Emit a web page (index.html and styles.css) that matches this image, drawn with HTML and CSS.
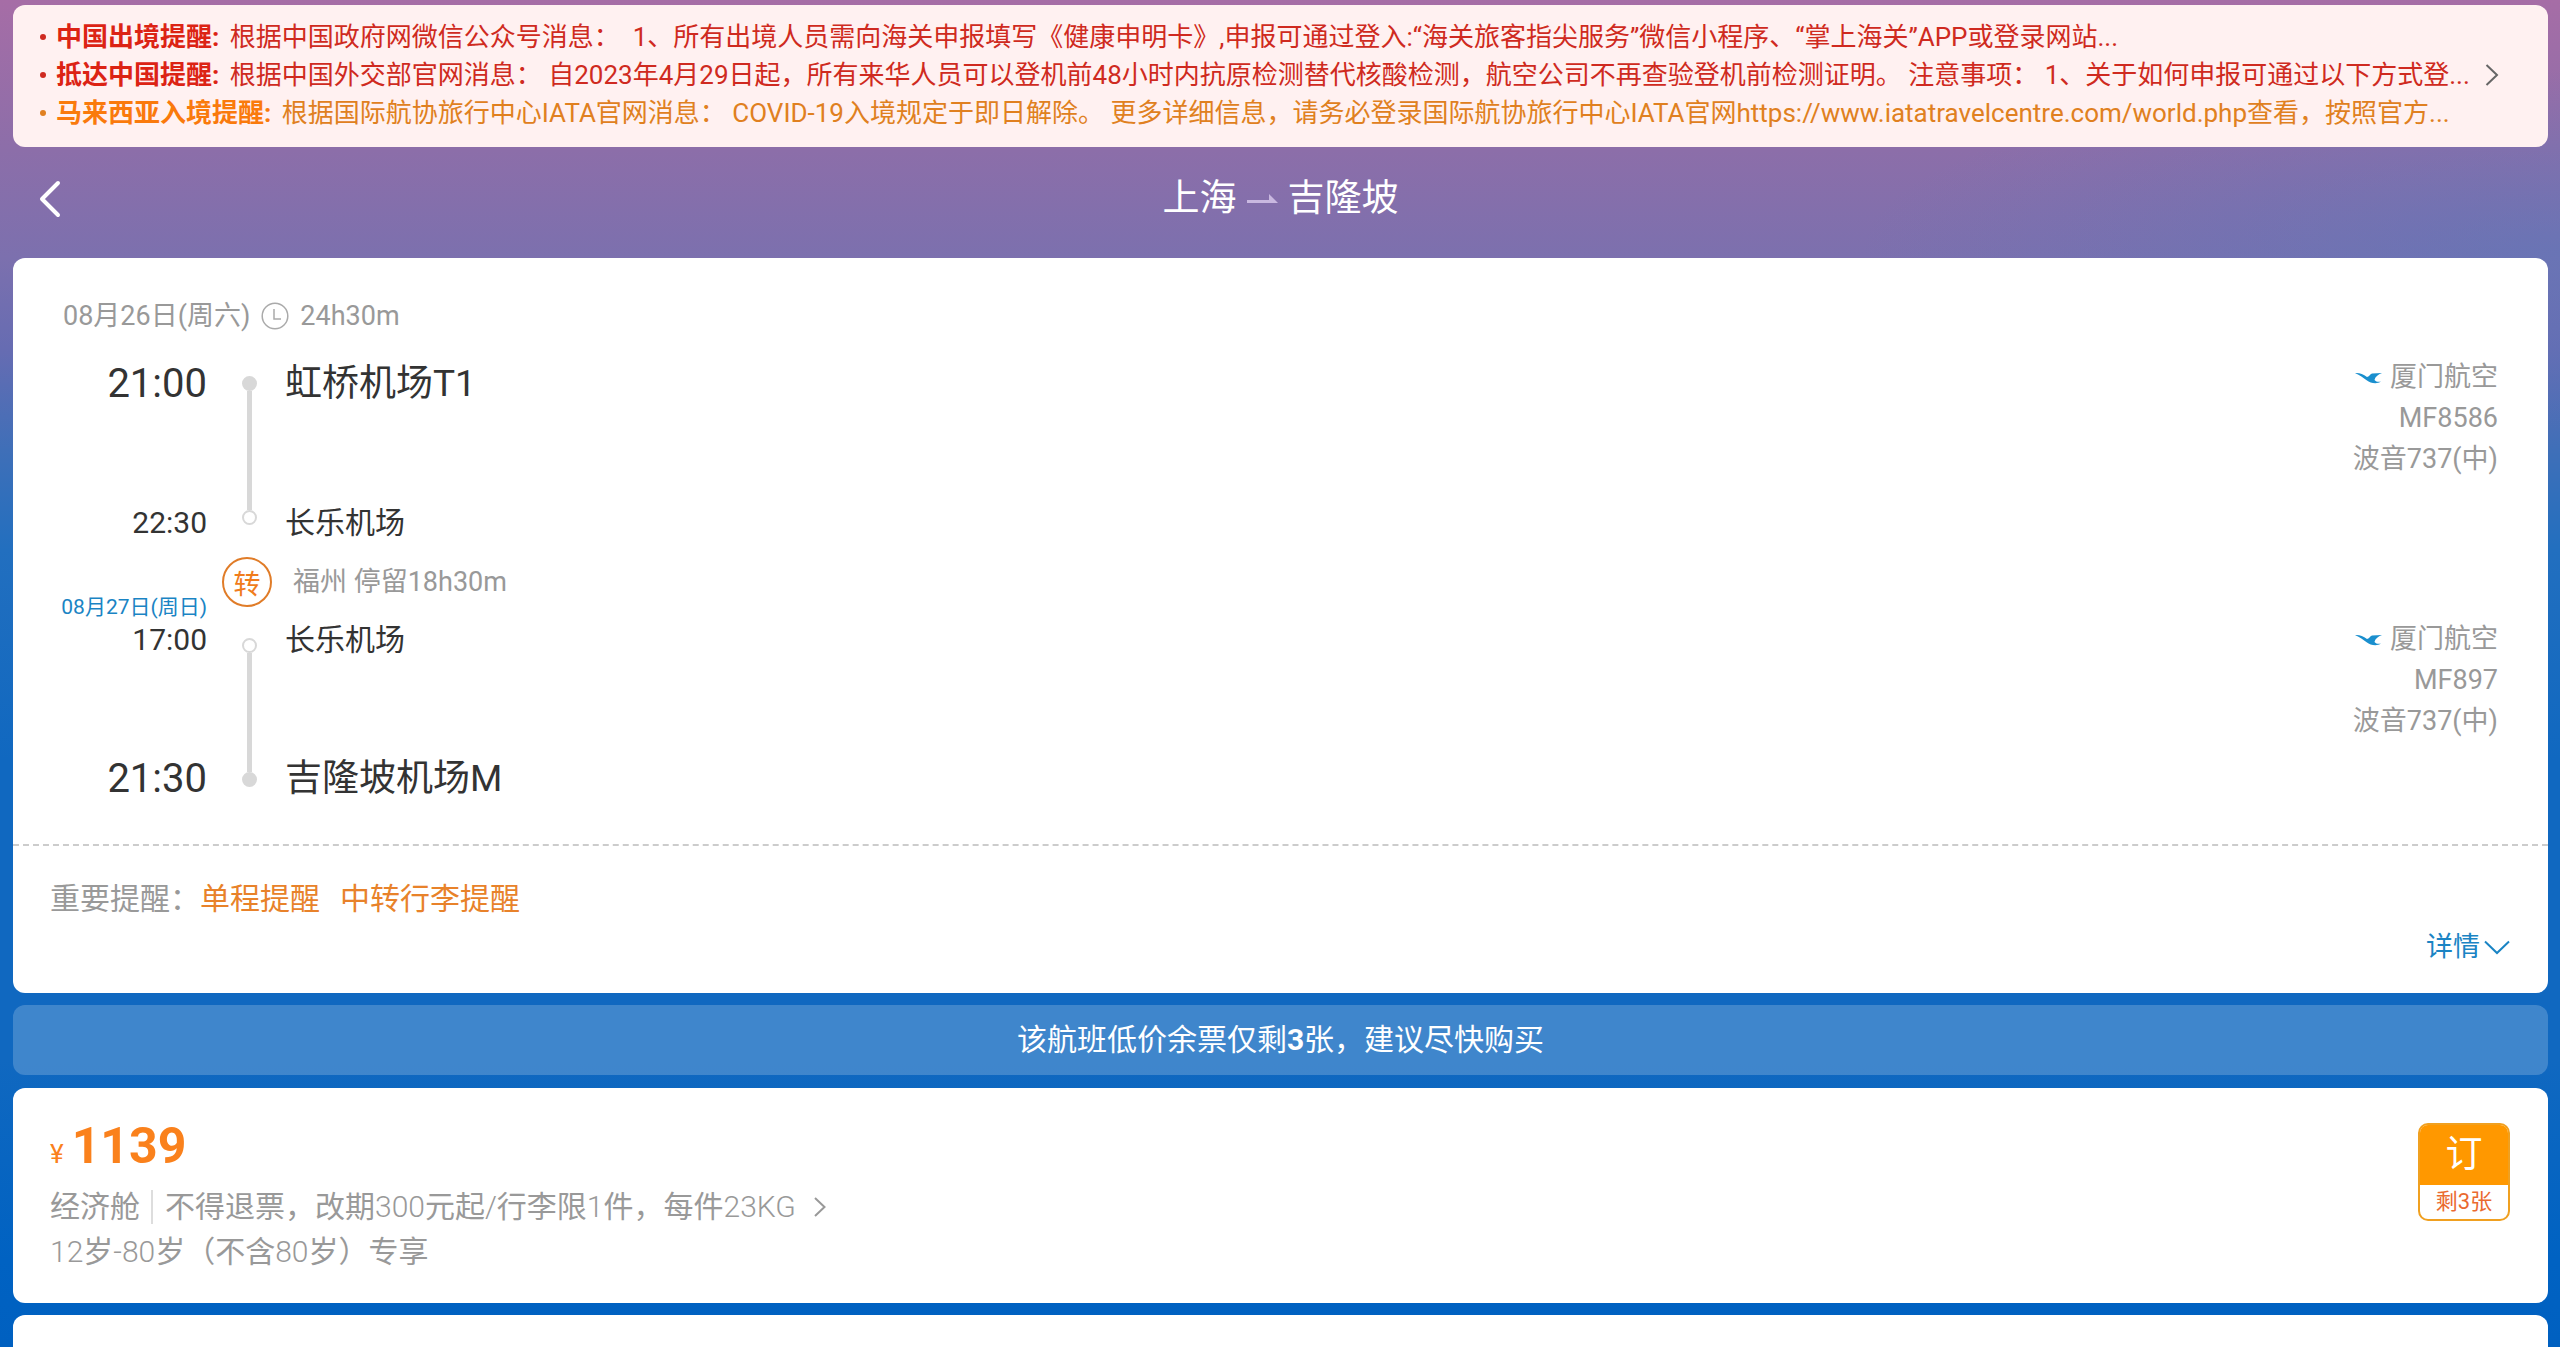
FILE: index.html
```html
<!DOCTYPE html>
<html lang="zh-CN">
<head>
<meta charset="utf-8">
<meta name="viewport" content="width=device-width, initial-scale=1">
<title>上海 - 吉隆坡</title>
<link rel="stylesheet" href="styles.css">
</head>
<body>
<a class="notice" href="#notice">
  <ul class="notice-list">
    <li><strong>中国出境提醒:</strong> 根据中国政府网微信公众号消息：&nbsp; 1、所有出境人员需向海关申报填写《健康申明卡》,申报可通过登入:“海关旅客指尖服务”微信小程序、“掌上海关”APP或登录网站...</li>
    <li><strong>抵达中国提醒:</strong> 根据中国外交部官网消息： 自2023年4月29日起，所有来华人员可以登机前48小时内抗原检测替代核酸检测，航空公司不再查验登机前检测证明。 注意事项： 1、关于如何申报可通过以下方式登...</li>
    <li class="warn"><strong>马来西亚入境提醒:</strong> 根据国际航协旅行中心IATA官网消息： COVID-19入境规定于即日解除。 更多详细信息，请务必登录国际航协旅行中心IATA官网https://www.iatatravelcentre.com/world.php查看，按照官方...</li>
  </ul>
  <svg class="notice-arrow" width="14" height="22" viewBox="0 0 14 22"><path d="M1.500 1 L12 11 L1.500 21" fill="none" stroke="#666" stroke-width="2"/></svg>
</a>

<header class="header">
  <button class="back" type="button" aria-label="返回">
    <svg width="22" height="38" viewBox="0 0 22 38"><path d="M19 3 L3 19 L19 35" fill="none" stroke="#fff" stroke-width="4" stroke-linecap="round" stroke-linejoin="round"/></svg>
  </button>
  <h1 class="title">上海
    <svg width="31" height="10" viewBox="0 0 31 10"><path d="M0 6 H22 V0 L31 9 H0 Z" fill="#c9b8e0"/></svg>
    吉隆坡</h1>
</header>

<main class="content">
  <section class="card">
    <div class="journey">
      <p class="summary">08月26日(周六)
        <svg width="28" height="28" viewBox="0 0 28 28" fill="none" stroke="#aaa" stroke-width="1.500"><circle cx="14" cy="14" r="12.800"/><path d="M13 7 V17 H20"/></svg>
        24h30m</p>

      <div class="leg">
        <div class="times"><time class="major">21:00</time><time>22:30</time></div>
        <div class="rail"><i class="dot"></i><i class="line"></i><i class="dot open"></i></div>
        <div class="places"><span class="major">虹桥机场T1</span><span>长乐机场</span></div>
        <div class="flight">
          <span class="airline"><svg width="27" height="12" viewBox="0 0 27 12"><path d="M0 1 C4 .500 8 2 12 5 C14 5 15 2 17 1.500 L27 1 C23 2.500 20 5 19.500 8 C21 10 24 10 26 9.500 C22 12.500 15 11 12 8.500 C8 6 5 3 0 1 Z" fill="#1a8fce"/></svg>厦门航空</span>
          <span>MF8586</span><span>波音737(中)</span>
        </div>
      </div>

      <div class="transit">
        <time class="next-day">08月27日(周日)</time>
        <span class="badge">转</span>
        <span class="stay">福州 停留18h30m</span>
      </div>

      <div class="leg">
        <div class="times"><time>17:00</time><time class="major">21:30</time></div>
        <div class="rail"><i class="dot open"></i><i class="line"></i><i class="dot"></i></div>
        <div class="places"><span>长乐机场</span><span class="major">吉隆坡机场M</span></div>
        <div class="flight">
          <span class="airline"><svg width="27" height="12" viewBox="0 0 27 12"><path d="M0 1 C4 .500 8 2 12 5 C14 5 15 2 17 1.500 L27 1 C23 2.500 20 5 19.500 8 C21 10 24 10 26 9.500 C22 12.500 15 11 12 8.500 C8 6 5 3 0 1 Z" fill="#1a8fce"/></svg>厦门航空</span>
          <span>MF897</span><span>波音737(中)</span>
        </div>
      </div>
    </div>

    <div class="reminders">
      <p class="reminder-line">重要提醒：<a href="#oneway">单程提醒</a><a href="#baggage">中转行李提醒</a></p>
      <button class="more" type="button">详情<svg width="26" height="15" viewBox="0 0 26 15"><path d="M1 1.500 L13 13 L25 1.500" fill="none" stroke="#1a84c4" stroke-width="2"/></svg></button>
    </div>
  </section>

  <p class="banner">该航班低价余票仅剩<b>3</b>张，建议尽快购买</p>

  <section class="card fare">
    <div class="fare-info">
      <p class="price"><span class="yen">¥</span><strong>1139</strong></p>
      <a class="rules" href="#rules"><span class="cabin">经济舱</span><span>不得退票，改期<i>300</i>元起<i>/</i>行李限<i>1</i>件，每件<i>23KG</i></span><svg width="12" height="20" viewBox="0 0 12 20"><path d="M1 1 L10.500 10 L1 19" fill="none" stroke="#999" stroke-width="2"/></svg></a>
      <p class="age"><i>12</i>岁<i>-80</i>岁（不含<i>80</i>岁）专享</p>
    </div>
    <button class="book" type="button"><span class="book-label">订</span><span class="book-left">剩3张</span></button>
  </section>

  <section class="card next-fare"></section>
</main>
</body>
</html>
```
FILE: styles.css
```css
* {
  box-sizing: border-box;
  margin: 0;
  padding: 0;
}

html {
  height: 100%;
}

body {
  display: flex;
  flex-direction: column;
  min-height: 100%;
  padding: 5px 12px 0 13px;
  font-family: Roboto, "Noto Sans CJK SC", sans-serif;
  font-size: 27px;
  color: #333;
  background:
    radial-gradient(700px 180px at 100% 250px, rgba(86, 120, 188, .5), transparent),
    linear-gradient(180deg, #a66da6 0, #8c6ea9 150px, #7c70ae 258px, #666cb2 350px, #3f6fb8 450px, #226fbf 550px, #1068c0 760px, #1068c0 1060px, #0062c2 1260px, #0060c0 100%);
}

a {
  color: inherit;
  text-decoration: none;
}

button {
  font: inherit;
  border: 0;
  background: none;
  cursor: pointer;
}

i {
  font-style: normal;
}

svg {
  flex: none;
}

.notice {
  display: flex;
  align-items: center;
  justify-content: space-between;
  padding: 13px 49px 15px 25px;
  border-radius: 12px;
  background: #fff1f1;
  color: #cf2a20;
  font-size: 26px;
  line-height: 38px;
}

.notice-list {
  min-width: 0;
  list-style: none;
}

.notice-list li {
  display: flex;
  align-items: center;
  white-space: pre;
}

.notice-list li::before {
  content: "";
  width: 6px;
  height: 6px;
  margin: 0 10px 0 2px;
  border-radius: 50%;
  background: currentColor;
}

.notice-list strong {
  margin-right: 4px;
  color: #dc2314;
}

.notice-list .warn {
  color: #e08020;
}

.notice-list .warn strong {
  color: #fa7a0c;
}

.header {
  display: grid;
  grid-template-columns: 1fr auto 1fr;
  align-items: center;
  padding: 24px 26px 31px;
}

.back {
  display: flex;
  justify-self: start;
}

.title {
  display: flex;
  align-items: center;
  gap: 10px;
  font-size: 37px;
  font-weight: 400;
  line-height: 56px;
  color: #fff;
}

.content {
  display: flex;
  flex: 1;
  flex-direction: column;
}

.card {
  margin-bottom: 12px;
  border-radius: 12px;
  background: #fff;
}

.journey {
  padding: 38px 50px 38px 0;
}

.summary {
  display: flex;
  align-items: center;
  gap: 11px;
  margin-bottom: 21px;
  padding-left: 50px;
  line-height: 40px;
  color: #999;
}

.leg,
.transit {
  display: grid;
  grid-template-columns: 194px 48px 1fr auto;
  column-gap: 15px;
}

.leg {
  min-height: 187px;
  line-height: 42px;
}

.times,
.places {
  display: flex;
  flex-direction: column;
  justify-content: space-between;
  font-size: 30px;
}

.times {
  text-align: right;
}

.times .major {
  font-size: 40px;
  line-height: 54px;
}

.places .major {
  font-size: 37px;
  line-height: 54px;
}

.rail {
  display: flex;
  flex-direction: column;
  align-items: center;
  padding: 19px 0 19px 6px;
}

.dot {
  width: 15px;
  height: 15px;
  border-radius: 50%;
  background: #d8d8d8;
}

.dot.open {
  border: 2px solid #d8d8d8;
  background: #fff;
}

.line {
  flex: 1;
  width: 5px;
  background: #d8d8d8;
}

.flight {
  display: flex;
  flex-direction: column;
  align-items: flex-end;
  line-height: 41px;
  color: #999;
}

.airline {
  display: flex;
  align-items: center;
  gap: 8px;
}

.transit {
  margin-top: 13px;
}

.next-day {
  margin-top: 38px;
  text-align: right;
  font-size: 21px;
  line-height: 24px;
  color: #1a84c4;
}

.badge {
  display: grid;
  place-items: center;
  width: 50px;
  height: 50px;
  border: 2px solid #e07c28;
  border-radius: 50%;
  color: #f07c1c;
}

.stay {
  padding-left: 8px;
  line-height: 50px;
  color: #999;
}

.reminders {
  display: flex;
  flex-direction: column;
  gap: 8px;
  padding: 33px 38px 26px 37px;
  border-top: 2px dashed #ccc;
  line-height: 40px;
}

.reminder-line {
  font-size: 30px;
  color: #999;
}

.reminder-line a {
  margin-right: 20px;
  color: #e8822a;
}

.more {
  display: flex;
  align-items: center;
  align-self: flex-end;
  gap: 4px;
  color: #1a84c4;
}

.banner {
  margin-bottom: 13px;
  border-radius: 12px;
  background: rgba(255, 255, 255, .2);
  text-align: center;
  font-size: 30px;
  line-height: 70px;
  color: #fff;
}

.fare {
  display: flex;
  align-items: flex-start;
  justify-content: space-between;
  padding: 28px 38px 29px 37px;
  font-size: 30px;
  line-height: 45px;
  color: #999;
}

.fare i {
  font-weight: 300;
}

.price {
  display: flex;
  align-items: baseline;
  gap: 8px;
  margin-bottom: 8px;
  line-height: 60px;
  color: #fa811c;
}

.price strong {
  font-size: 50px;
}

.yen {
  font-size: 26px;
  line-height: 30px;
}

.rules {
  display: flex;
  align-items: center;
}

.cabin {
  margin-right: 12px;
  padding-right: 11px;
  border-right: 2px solid #ddd;
  line-height: 34px;
}

.rules svg {
  margin-left: 18px;
}

.book {
  display: flex;
  flex-direction: column;
  width: 92px;
  margin-top: 7px;
  border: 2px solid #f0a020;
  border-radius: 10px;
  overflow: hidden;
}

.book-label {
  background: #ff9800;
  font-size: 37px;
  line-height: 60px;
  color: #fff;
}

.book-left {
  font-size: 22px;
  line-height: 34px;
  color: #ea6a30;
}

.next-fare {
  flex: 1;
  margin-bottom: 0;
  border-radius: 12px 12px 0 0;
}
```
